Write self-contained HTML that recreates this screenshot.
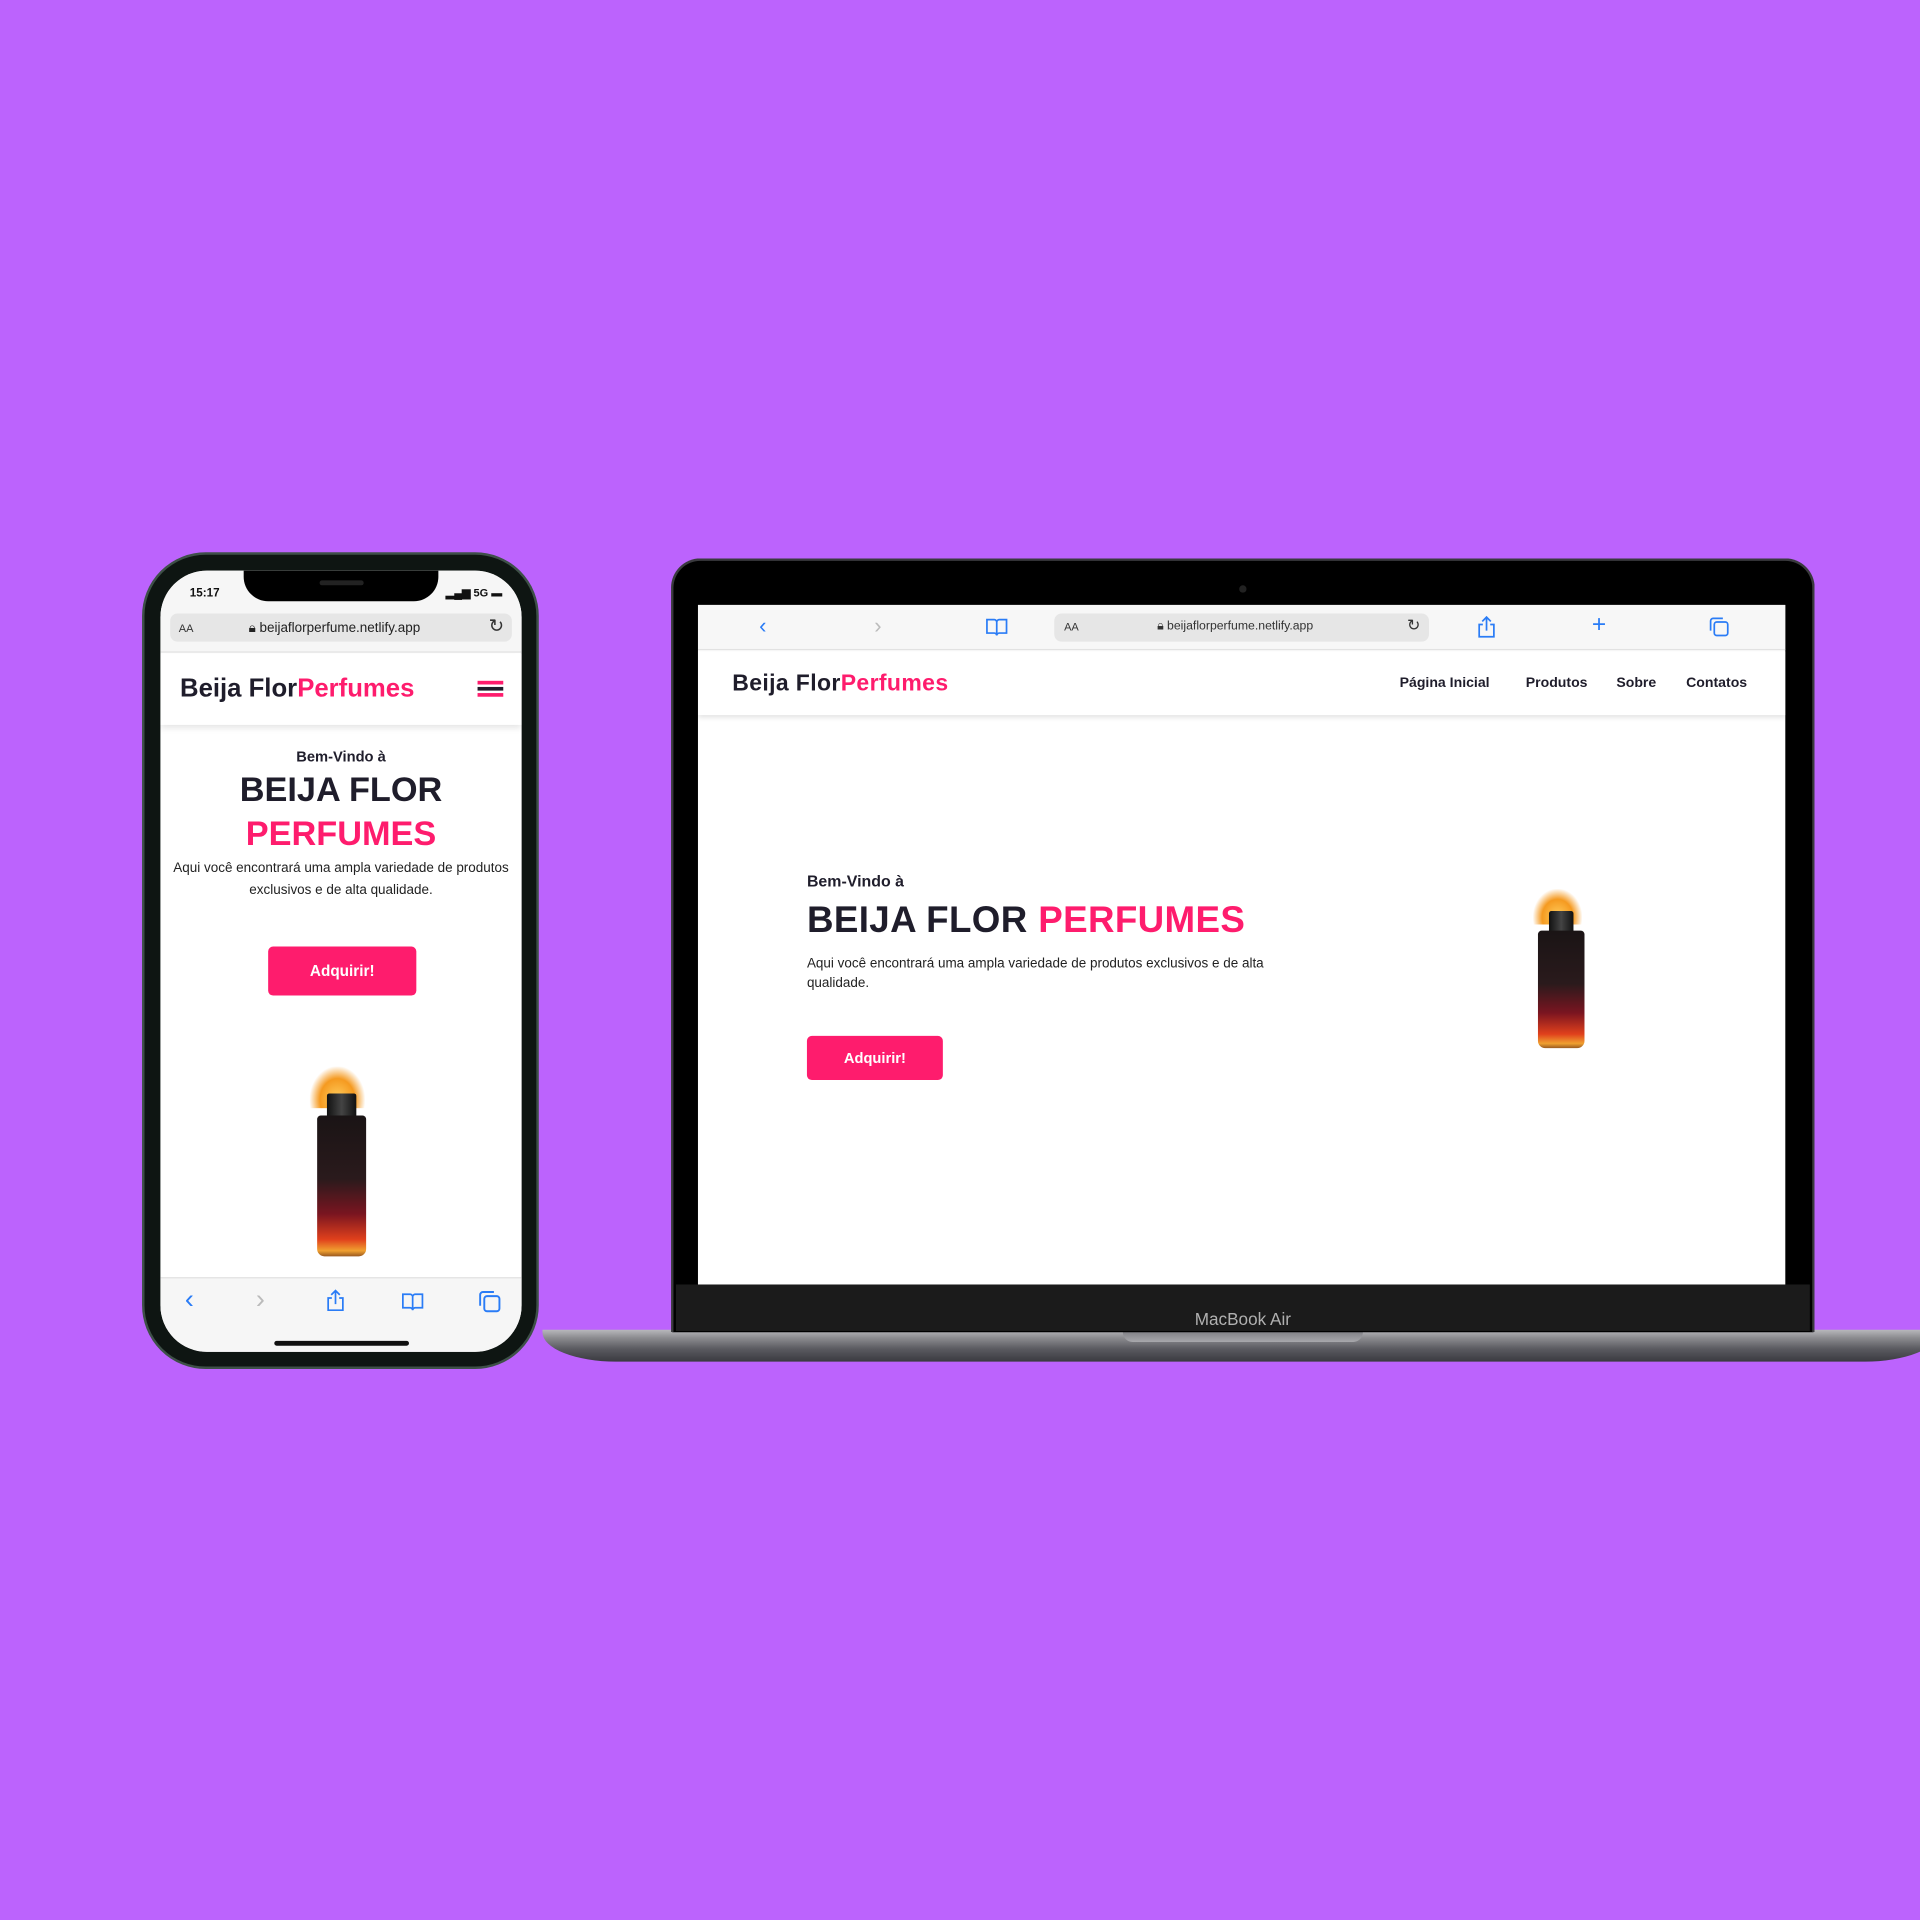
<!DOCTYPE html>
<html><head><meta charset="utf-8"><style>
*{margin:0;padding:0;box-sizing:border-box}
html,body{width:1920px;height:1920px;overflow:hidden;background:#bc63fd}
#w{position:absolute;left:0;top:0;width:1568px;height:1568px;transform:scale(1.22449);transform-origin:0 0;font-family:"Liberation Sans",sans-serif}
.a{position:absolute}
.pink{color:#fe1c6d}
.dark{color:#1f1d2b}
.btn{background:#fe1c6d;color:#fff;border-radius:4px;text-align:center;font-weight:bold}
.bottle{position:absolute}
.bottle .cap{position:absolute;left:32%;width:36%;top:14%;height:14%;background:linear-gradient(90deg,#111,#444,#111);border-radius:2px}
.bottle .body{position:absolute;left:18%;width:64%;top:26%;bottom:0;background:linear-gradient(180deg,#1a1415 0%,#2a1a1c 45%,#7a1520 70%,#e0401c 88%,#f0a030 96%,#9a5a20 100%);border-radius:3px 3px 6px 6px}
.bottle .fl{position:absolute;left:10%;width:70%;top:0;height:22%;background:radial-gradient(ellipse at 50% 80%,#ffcf60,#f59a20 45%,rgba(245,150,30,0) 72%)}
</style></head><body><div id="w">

<div class="a" style="left:443px;top:1086px;width:1140px;height:26px;background:linear-gradient(180deg,#b8b8bc 0,#8c8c90 25%,#5a5a60 60%,#3a3a40 100%);border-radius:0 0 60px 60px/0 0 24px 24px"></div>
<div class="a" style="left:917px;top:1086px;width:196px;height:10px;background:linear-gradient(#7a7a80,#a8a8ac);border-radius:0 0 8px 8px"></div>
<div class="a" style="left:548px;top:456px;width:934px;height:632px;background:#000;border-radius:24px 24px 0 0;border:2px solid #3a3a3e;border-bottom:none"></div>
<div class="a" style="left:552px;top:1049px;width:926px;height:38px;background:#1b1b1b"></div>
<div class="a" style="left:960px;top:1069px;width:110px;text-align:center;color:#b0b0b0;font-size:14px">MacBook Air</div>
<div class="a" style="left:1012px;top:478px;width:6px;height:6px;border-radius:3px;background:#222"></div>

<div class="a" style="left:570px;top:494px;width:888px;height:555px;background:#fff;overflow:hidden">
  <div class="a" style="left:0;top:0;width:888px;height:37px;background:#f7f7f7;border-bottom:1px solid #e2e2e2"></div>
  <div class="a" style="left:50px;top:7px;font-size:18px;color:#2a7cf6">‹</div>
  <div class="a" style="left:144px;top:7px;font-size:18px;color:#bbb">›</div>
  <svg class="a" style="left:234px;top:10px" width="20" height="16" viewBox="0 0 20 16"><path d="M2 2h6c1 0 2 1 2 2v11c0-1-1-2-2-2H2zM18 2h-6c-1 0-2 1-2 2v11c0-1 1-2 2-2h6z" fill="none" stroke="#2a7cf6" stroke-width="1.4"/></svg>
  <div class="a" style="left:291px;top:7px;width:306px;height:23px;background:#e6e6e6;border-radius:6px"></div>
  <div class="a" style="left:299px;top:13px;font-size:9px;color:#333">AA</div>
  <div class="a" style="left:375px;top:12px;font-size:10px;color:#333">🔒︎ beijaflorperfume.netlify.app</div>
  <div class="a" style="left:579px;top:9px;font-size:13px;color:#333">↻</div>
  <svg class="a" style="left:636px;top:8px" width="16" height="20" viewBox="0 0 16 20"><path d="M8 2v11M4.5 5.5L8 2l3.5 3.5M5 8H2v10h12V8h-3" fill="none" stroke="#2a7cf6" stroke-width="1.4"/></svg>
  <div class="a" style="left:730px;top:5px;font-size:20px;color:#2a7cf6">+</div>
  <svg class="a" style="left:826px;top:10px" width="16" height="16" viewBox="0 0 16 16"><rect x="4" y="4" width="11" height="11" rx="2" fill="none" stroke="#2a7cf6" stroke-width="1.4"/><path d="M1 11V3c0-1 1-2 2-2h8" fill="none" stroke="#2a7cf6" stroke-width="1.4"/></svg>
  <div class="a" style="left:0;top:38px;width:888px;height:52px;background:#fff;box-shadow:0 2px 4px rgba(0,0,0,.12)"></div>
  <div class="a dark" style="left:28px;top:53px;font-size:18.8px;font-weight:bold;letter-spacing:.3px">Beija Flor<span class="pink">Perfumes</span></div>
  <div class="a dark" style="left:573px;top:58px;font-size:11.5px;font-weight:bold">Página Inicial</div>
  <div class="a dark" style="left:676px;top:58px;font-size:11.5px;font-weight:bold">Produtos</div>
  <div class="a dark" style="left:750px;top:58px;font-size:11.5px;font-weight:bold">Sobre</div>
  <div class="a dark" style="left:807px;top:58px;font-size:11.5px;font-weight:bold">Contatos</div>
  <div class="a dark" style="left:89px;top:218px;font-size:13px;font-weight:bold">Bem-Vindo à</div>
  <div class="a dark" style="left:89px;top:241px;font-size:30px;font-weight:bold;letter-spacing:.3px">BEIJA FLOR <span class="pink">PERFUMES</span></div>
  <div class="a" style="left:89px;top:285px;width:410px;font-size:11px;line-height:16px;color:#222">Aqui você encontrará uma ampla variedade de produtos exclusivos e de alta qualidade.</div>
  <div class="a btn" style="left:89px;top:352px;width:111px;height:36px;line-height:36px;font-size:12px">Adquirir!</div>
  <div class="bottle" style="left:676px;top:232px;width:58px;height:130px"><div class="fl"></div><div class="cap"></div><div class="body"></div></div>
</div>

<div class="a" style="left:116px;top:451px;width:324px;height:667px;background:#0e1512;border-radius:52px;border:2px solid #3e5048"></div>
<div class="a" style="left:131px;top:466px;width:295px;height:638px;background:#fff;border-radius:38px;overflow:hidden">
  <div class="a" style="left:0;top:0;width:295px;height:67px;background:#f6f6f6;border-bottom:1px solid #e2e2e2"></div>
  <div class="a" style="left:68px;top:0;width:159px;height:25px;background:#000;border-radius:0 0 20px 20px"></div>
  <div class="a" style="left:130px;top:8px;width:36px;height:4px;background:#222;border-radius:2px"></div>
  <div class="a" style="left:24px;top:13px;font-size:9.5px;font-weight:bold;color:#111">15:17</div>
  <div class="a" style="left:233px;top:13px;font-size:9px;font-weight:bold;color:#111">▂▄▆ 5G ▬</div>
  <div class="a" style="left:8px;top:35px;width:279px;height:23px;background:#e6e6e6;border-radius:6px"></div>
  <div class="a" style="left:15px;top:42px;font-size:9px;color:#333">AA</div>
  <div class="a" style="left:72px;top:41px;font-size:11px;color:#222">🔒︎ beijaflorperfume.netlify.app</div>
  <div class="a" style="left:268px;top:36px;font-size:15px;color:#333">↻</div>
  <div class="a" style="left:0;top:68px;width:295px;height:58px;background:#fff;box-shadow:0 3px 5px rgba(0,0,0,.1)"></div>
  <div class="a dark" style="left:16px;top:85px;font-size:21px;font-weight:bold">Beija Flor<span class="pink">Perfumes</span></div>
  <div class="a" style="left:259px;top:90px;width:21px;height:3px;background:#fe1c6d;box-shadow:0 5px 0 #1f1d2b,0 10px 0 #fe1c6d"></div>
  <div class="a dark" style="left:0;top:145px;width:295px;text-align:center;font-size:12px;font-weight:bold">Bem-Vindo à</div>
  <div class="a dark" style="left:0;top:163px;width:295px;text-align:center;font-size:28px;font-weight:bold">BEIJA FLOR</div>
  <div class="a pink" style="left:0;top:199px;width:295px;text-align:center;font-size:28px;font-weight:bold">PERFUMES</div>
  <div class="a" style="left:4px;top:234px;width:287px;text-align:center;font-size:11px;line-height:18px;color:#222">Aqui você encontrará uma ampla variedade de produtos exclusivos e de alta qualidade.</div>
  <div class="a btn" style="left:88px;top:307px;width:121px;height:40px;line-height:40px;font-size:12.5px">Adquirir!</div>
  <div class="bottle" style="left:116px;top:405px;width:64px;height:155px"><div class="fl"></div><div class="cap"></div><div class="body"></div></div>
  <div class="a" style="left:0;top:577px;width:295px;height:61px;background:#f6f6f6;border-top:1px solid #e2e2e2"></div>
  <div class="a" style="left:20px;top:582px;font-size:22px;color:#2a7cf6">‹</div>
  <div class="a" style="left:78px;top:582px;font-size:22px;color:#bbb">›</div>
  <svg class="a" style="left:135px;top:586px" width="16" height="20" viewBox="0 0 16 20"><path d="M8 2v11M4.5 5.5L8 2l3.5 3.5M5 8H2v10h12V8h-3" fill="none" stroke="#2a7cf6" stroke-width="1.4"/></svg>
  <svg class="a" style="left:196px;top:589px" width="20" height="16" viewBox="0 0 20 16"><path d="M2 2h6c1 0 2 1 2 2v11c0-1-1-2-2-2H2zM18 2h-6c-1 0-2 1-2 2v11c0-1 1-2 2-2h6z" fill="none" stroke="#2a7cf6" stroke-width="1.4"/></svg>
  <svg class="a" style="left:260px;top:588px" width="18" height="18" viewBox="0 0 16 16"><rect x="4" y="4" width="11" height="11" rx="2" fill="none" stroke="#2a7cf6" stroke-width="1.4"/><path d="M1 11V3c0-1 1-2 2-2h8" fill="none" stroke="#2a7cf6" stroke-width="1.4"/></svg>
  <div class="a" style="left:93px;top:629px;width:110px;height:4px;background:#111;border-radius:2px"></div>
</div>

</div></body></html>
